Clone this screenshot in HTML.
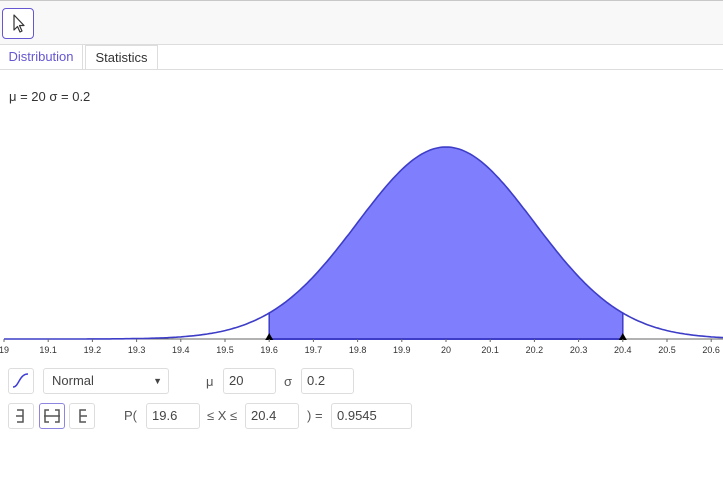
<!DOCTYPE html>
<html><head><meta charset="utf-8"><style>
*{box-sizing:border-box;margin:0;padding:0}
body{width:723px;height:488px;overflow:hidden;background:#fff;font-family:"Liberation Sans",sans-serif;position:relative;color:#333}
.top{position:absolute;left:0;top:0;width:723px;height:45px;background:#f8f8f8;border-top:1px solid #c8c8c8;border-bottom:1px solid #ddd}
.btn{position:absolute;left:2px;top:7px;width:32px;height:31px;border:1.5px solid #6557d2;border-radius:4px;background:#fff}
.tab{position:absolute;top:45px;height:25px;font-size:13px;line-height:24px;text-align:center}
.line{position:absolute;left:0;top:69px;width:723px;height:1px;background:#ddd}
.box{position:absolute;border:1px solid #ddd;border-radius:3px;background:#fff;font-size:13px;line-height:23px;padding-left:5px;color:#444}
.lbl{position:absolute;font-size:13px;color:#555}
.ib{position:absolute;width:26px;height:26px;border:1px solid #ddd;border-radius:3px;background:#fff}
</style></head><body>
<div class="top"><div class="btn"><svg width="30" height="28" viewBox="0 0 30 28"><path d="M11 6 L11 21 L14.5 17.5 L17 23 L19 22 L16.5 16.5 L21 16.5 Z" fill="#fff" stroke="#333" stroke-width="1.2" stroke-linejoin="round"/></svg></div></div>
<div class="tab" style="left:0;width:83px;color:#6557d2;background:#fff;border-right:1px solid #ddd">Distribution</div>
<div class="tab" style="left:85px;width:73px;border:1px solid #ddd;border-bottom:none;color:#333;background:#fff">Statistics</div>
<div class="line"></div>
<div class="lbl" style="left:9px;top:89px;color:#333">μ = 20 σ = 0.2</div>
<svg id="g" style="position:absolute;left:0;top:0" width="723" height="360"></svg>
<div class="ib" style="left:8px;top:368px"><svg width="24" height="24"><path d="M4 18 C10 18 10 5 19 5" stroke="#3d3dd8" stroke-width="1.5" fill="none"/></svg></div>
<div class="box" style="left:43px;top:368px;width:126px;height:26px;line-height:24px;padding-left:8px">Normal<span style="position:absolute;right:6px;font-size:9px">▼</span></div>
<div class="lbl" style="left:206px;top:374px">μ</div>
<div class="box" style="left:223px;top:368px;width:53px;height:26px">20</div>
<div class="lbl" style="left:284px;top:374px">σ</div>
<div class="box" style="left:301px;top:368px;width:53px;height:26px">0.2</div>
<div class="ib" style="left:8px;top:403px"><svg width="24" height="24"><path d="M8 6 H14 V18 H8 M7 12 H14" stroke="#555" stroke-width="1.5" fill="none"/></svg></div>
<div class="ib" style="left:39px;top:403px;border-color:#8d85e0"><svg width="24" height="24"><path d="M9 6 H5 V18 H9 M15 6 H19 V18 H15 M4 12 H20" stroke="#555" stroke-width="1.5" fill="none"/></svg></div>
<div class="ib" style="left:69px;top:403px"><svg width="24" height="24"><path d="M16 6 H10 V18 H16 M10 12 H17" stroke="#555" stroke-width="1.5" fill="none"/></svg></div>
<div class="lbl" style="left:124px;top:408px">P(</div>
<div class="box" style="left:146px;top:403px;width:54px;height:26px">19.6</div>
<div class="lbl" style="left:207px;top:408px">≤ X ≤</div>
<div class="box" style="left:245px;top:403px;width:54px;height:26px">20.4</div>
<div class="lbl" style="left:307px;top:408px">) =</div>
<div class="box" style="left:331px;top:403px;width:81px;height:26px">0.9545</div>
<script>
var ns="http://www.w3.org/2000/svg",g=document.getElementById("g");
function X(v){return 446+(v-20)*442}
function Y(v){return 339-192*Math.exp(-(v-20)*(v-20)/0.08)}
function el(t,a){var e=document.createElementNS(ns,t);for(var k in a)e.setAttribute(k,a[k]);g.appendChild(e);return e}
var d="M"+X(19.6)+" 339";
for(var v=19.6;v<=20.4001;v+=0.005)d+=" L"+X(v).toFixed(1)+" "+Y(v).toFixed(1);
d+=" L"+X(20.4)+" 339Z";
el("path",{d:d,fill:"#7f7ffe"});
el("line",{x1:4,y1:339,x2:723,y2:339,stroke:"#666","stroke-width":1});
var c="";for(var v=19.0;v<=20.65;v+=0.005)c+=(c?" L":"M")+X(v).toFixed(1)+" "+Y(v).toFixed(1);
el("path",{d:c,fill:"none",stroke:"#3d3dc8","stroke-width":1.6});
el("line",{x1:X(19.6),y1:Y(19.6),x2:X(19.6),y2:339,stroke:"#3d3dc8","stroke-width":1.5});
el("line",{x1:X(20.4),y1:Y(20.4),x2:X(20.4),y2:339,stroke:"#3d3dc8","stroke-width":1.5});
el("line",{x1:X(19.6),y1:339,x2:X(20.4),y2:339,stroke:"#3d3dc8","stroke-width":2});
[19.6,20.4].forEach(function(v){var x=X(v);el("path",{d:"M"+(x-4)+" 340 L"+(x+4)+" 340 L"+x+" 333Z",fill:"#000"})});
for(var i=0;i<=16;i++){var v=19+i*0.1,x=X(v);el("line",{x1:x,y1:339,x2:x,y2:342,stroke:"#666"});
var t=el("text",{x:x,y:353,"font-size":"9","font-family":"Liberation Sans","text-anchor":"middle",fill:"#333"});
var s=(Math.round(v*10)/10).toString();if(i==0)s="19";if(i==10)s="20";t.textContent=s;}
</script>
</body></html>
